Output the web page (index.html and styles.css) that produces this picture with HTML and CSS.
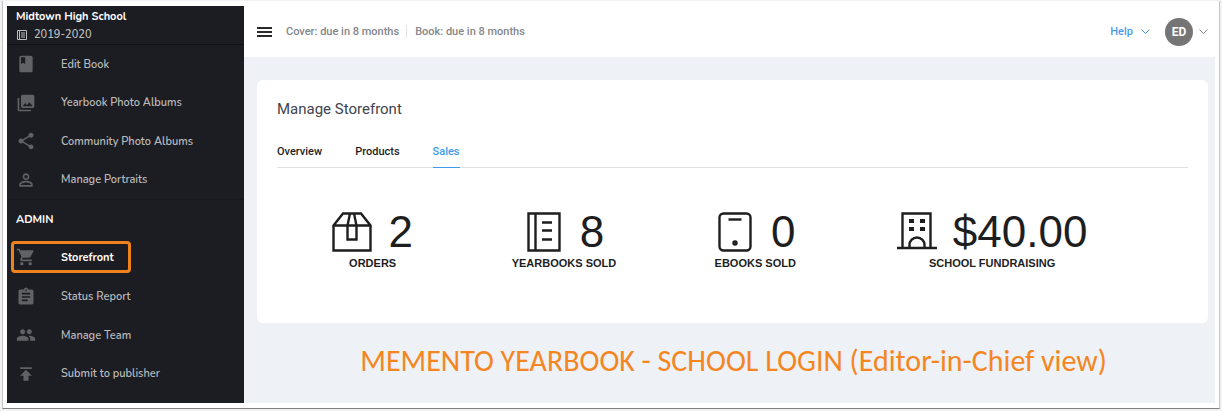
FILE: index.html
```html
<!DOCTYPE html>
<html lang="en">
<head>
    <meta charset="UTF-8">
    <meta name="viewport" content="width=device-width, initial-scale=1.0">
    <title>Manage Storefront</title>
    <link rel="stylesheet" href="styles.css">
</head>
<body>
    <div class="frame">
        <!-- Sidebar -->
        <aside class="sidebar">
            <div class="school">
                <div class="school-name">Midtown High School</div>
                <div class="school-year">
                    <svg width="12" height="12" viewBox="0 0 12 12" fill="none" stroke="currentColor"><path d="M1.5 1.5h9v9h-9zM3.5 1.5v9M5 4h4M5 6h4M5 8h4"/></svg>
                    2019-2020
                </div>
            </div>
            <nav>
                <ul class="menu">
                    <li><a href="#">
                        <svg viewBox="0 0 24 24"><path d="M18 2H6c-1.100 0-2 .9-2 2v16c0 1.100.9 2 2 2h12c1.100 0 2-.9 2-2V4c0-1.100-.9-2-2-2zM6 4h5v8l-2.500-1.500L6 12V4z"/></svg>
                        Edit Book</a></li>
                    <li><a href="#">
                        <svg viewBox="0 0 24 24"><path d="M22 16V4c0-1.100-.9-2-2-2H8c-1.100 0-2 .9-2 2v12c0 1.100.9 2 2 2h12c1.100 0 2-.9 2-2zm-11-4l2.030 2.710L16 11l4 5H8l3-4zM2 6v14c0 1.100.9 2 2 2h14v-2H4V6H2z"/></svg>
                        Yearbook Photo Albums</a></li>
                    <li><a href="#">
                        <svg viewBox="0 0 24 24"><path d="M18 16.080c-.76 0-1.440.3-1.960.77L8.910 12.700c.05-.23.09-.46.09-.7s-.04-.47-.09-.7l7.050-4.110c.54.5 1.250.81 2.040.81 1.660 0 3-1.340 3-3s-1.340-3-3-3-3 1.340-3 3c0 .24.04.47.09.7L8.040 9.810C7.500 9.310 6.790 9 6 9c-1.660 0-3 1.340-3 3s1.340 3 3 3c.79 0 1.500-.31 2.040-.81l7.120 4.160c-.05.21-.08.43-.08.65 0 1.610 1.310 2.920 2.920 2.920s2.920-1.310 2.920-2.920-1.310-2.920-2.920-2.920z"/></svg>
                        Community Photo Albums</a></li>
                    <li><a href="#">
                        <svg viewBox="0 0 24 24"><path d="M12 5.900a2.100 2.100 0 1 1 0 4.200 2.100 2.100 0 0 1 0-4.200m0 9c2.970 0 6.100 1.460 6.100 2.100v1.100H5.900V17c0-.64 3.130-2.100 6.100-2.100M12 4C9.790 4 8 5.790 8 8s1.790 4 4 4 4-1.790 4-4-1.790-4-4-4zm0 9c-2.670 0-8 1.340-8 4v3h16v-3c0-2.660-5.330-4-8-4z"/></svg>
                        Manage Portraits</a></li>
                </ul>
                <h2 class="menu-title">ADMIN</h2>
                <ul class="menu">
                    <li><a href="#" class="active">
                        <svg viewBox="0 0 24 24"><path d="M7 18c-1.100 0-1.990.9-1.990 2S5.900 22 7 22s2-.9 2-2-.9-2-2-2zM1 2v2h2l3.600 7.590-1.350 2.450c-.16.28-.25.61-.25.96 0 1.100.9 2 2 2h12v-2H7.420c-.14 0-.25-.11-.25-.25l.03-.12.9-1.630h7.450c.75 0 1.410-.41 1.750-1.030l3.580-6.490A1 1 0 0 0 20 4H5.210l-.94-2H1zm16 16c-1.100 0-1.990.9-1.990 2s.89 2 1.990 2 2-.9 2-2-.9-2-2-2z"/></svg>
                        Storefront</a></li>
                    <li><a href="#">
                        <svg viewBox="0 0 24 24"><path d="M19 3h-4.180C14.400 1.840 13.300 1 12 1s-2.400.84-2.820 2H5c-1.100 0-2 .9-2 2v14c0 1.100.9 2 2 2h14c1.100 0 2-.9 2-2V5c0-1.100-.9-2-2-2zm-7 0c.55 0 1 .45 1 1s-.45 1-1 1-1-.45-1-1 .45-1 1-1zm2 14H7v-2h7v2zm3-4H7v-2h10v2zm0-4H7V7h10v2z"/></svg>
                        Status Report</a></li>
                    <li><a href="#">
                        <svg viewBox="0 0 24 24"><path d="M16 11c1.660 0 2.990-1.340 2.990-3S17.660 5 16 5s-3 1.340-3 3 1.340 3 3 3zm-8 0c1.660 0 2.990-1.340 2.990-3S9.660 5 8 5 5 6.340 5 8s1.340 3 3 3zm0 2c-2.330 0-7 1.170-7 3.500V19h14v-2.500c0-2.330-4.670-3.500-7-3.500zm8 0c-.29 0-.62.02-.97.05 1.160.84 1.970 1.970 1.970 3.450V19h6v-2.500c0-2.330-4.670-3.500-7-3.500z"/></svg>
                        Manage Team</a></li>
                    <li><a href="#">
                        <svg viewBox="0 0 24 24"><path d="M5 4v2h14V4H5zm0 10h4v6h6v-6h4l-7-7-7 7z"/></svg>
                        Submit to publisher</a></li>
                </ul>
            </nav>
        </aside>

        <main class="main">
            <!-- Top bar -->
            <header class="topbar">
                <button type="button" class="burger" aria-label="Toggle menu">
                    <svg width="15" height="10" viewBox="0 0 15 10" fill="currentColor"><path d="M0 0h15v2H0zM0 4h15v2H0zM0 8h15v2H0z"/></svg>
                </button>
                <span class="due">Cover: due in 8 months</span>
                <span class="due">Book: due in 8 months</span>
                <a href="#" class="help">Help
                    <svg width="9" height="6" viewBox="0 0 9 6" fill="none" stroke="currentColor"><path d="M.5 .5l4 4 4-4"/></svg>
                </a>
                <button type="button" class="account" aria-label="Account">
                    <span class="avatar">ED</span>
                    <svg width="9" height="6" viewBox="0 0 9 6" fill="none" stroke="currentColor"><path d="M.5 .5l4 4 4-4"/></svg>
                </button>
            </header>

            <!-- Storefront card -->
            <section class="card">
                <h1>Manage Storefront</h1>
                <div class="tabs">
                    <a href="#">Overview</a>
                    <a href="#">Products</a>
                    <a href="#" class="selected">Sales</a>
                </div>
                <div class="stats">
                    <div class="stat">
                        <div class="figure">
                            <svg width="40" height="40" viewBox="0 0 40 40" stroke-width="2.4"><path d="M1.500 13.500L11 1.500h18l9.500 12v25h-37zM1.500 13.500h37M18 1.500l-2.500 12V27.500h9V13.500l-2.500-12"/></svg>
                            2
                        </div>
                        <div class="label">ORDERS</div>
                    </div>
                    <div class="stat">
                        <div class="figure">
                            <svg width="40" height="40" viewBox="-2 0 40 40" stroke-width="2.4"><path d="M2.500 1.500h31v37h-31zM9.500 1.500v37M16 10.500h10M16 18.500h10M16 27.500h10"/></svg>
                            8
                        </div>
                        <div class="label">YEARBOOKS SOLD</div>
                    </div>
                    <div class="stat">
                        <div class="figure">
                            <svg width="40" height="40" viewBox="-2 0 40 40" stroke-width="2.4"><rect x="2.500" y="1.500" width="31" height="37" rx="4"/><path d="M11.500 7.500h13"/><circle cx="18" cy="31" r="1.500"/></svg>
                            0
                        </div>
                        <div class="label">EBOOKS SOLD</div>
                    </div>
                    <div class="stat">
                        <div class="figure">
                            <svg width="40" height="40" viewBox="0 0 40 40" stroke-width="2.4"><path d="M5.500 36V1.500h28V36M0 36h40M12.500 36v-3a7.500 7.500 0 0 1 15 0v3"/><path class="solid" d="M12 7h5v4h-5zM23 7h5v4h-5zM12 15h5v4h-5zM23 15h5v4h-5z"/></svg>
                            $40.00
                        </div>
                        <div class="label">SCHOOL FUNDRAISING</div>
                    </div>
                </div>
            </section>

            <p class="caption">MEMENTO YEARBOOK - SCHOOL LOGIN (Editor-in-Chief view)</p>
        </main>
    </div>
</body>
</html>
```
FILE: styles.css
```css
* {
    box-sizing: border-box;
}

body {
    margin: 0;
    padding: 1px 2px 2px;
    min-height: 100vh;
    display: flex;
    background: #f2f2f2;
    font-family: Roboto, sans-serif;
    font-size: 11px;
    font-weight: 500;
    color: #1e1e1e;
}

a {
    color: inherit;
    text-decoration: none;
}

button {
    padding: 0;
    border: 0;
    background: none;
    font: inherit;
    color: inherit;
    cursor: pointer;
}

.frame {
    flex: 1;
    display: flex;
    padding: 5px 4px;
    background: white;
    border: solid #c4c4c4;
    border-width: 0 1px 1px;
    border-bottom-color: #808080;
}

/* Sidebar */
.sidebar {
    width: 237px;
    flex-shrink: 0;
    background: #1c1d22;
    color: #b9babc;
    font-family: Nunito, Lato, sans-serif;
    font-weight: 600;
}

.school {
    height: 39px;
    padding: 2px 9px 0;
    border-bottom: 1px solid #111216;
    line-height: 18px;
}

.school-name {
    color: white;
    font-weight: bold;
}

.school-year {
    display: flex;
    align-items: center;
    gap: 6px;
}

.menu {
    list-style: none;
    margin: 0;
    padding: 0;
    display: grid;
    grid-auto-rows: 1fr;
    height: 154px;
}

.menu a {
    height: 100%;
    display: flex;
    align-items: center;
    gap: 25px;
    padding-left: 9px;
}

.menu svg {
    width: 20px;
    height: 20px;
    fill: #616266;
}

.menu-title {
    margin: 0;
    padding: 1px 9px 0;
    border-top: 1px solid #17181c;
    color: white;
    font-size: 11px;
    line-height: 38px;
}

.menu .active {
    height: 32px;
    width: 120px;
    margin: 2px 0 4px 4px;
    padding-left: 2px;
    border: 3px solid #f0821e;
    border-radius: 4px;
    color: white;
    font-weight: bold;
}

/* Main area */
.main {
    flex: 1;
    background: #eef1f5;
}

.topbar {
    height: 51px;
    padding: 0 7px 0 13px;
    display: flex;
    align-items: center;
    background: white;
    color: #85878a;
}

.burger {
    display: flex;
    margin-right: 14px;
    color: #2a2a2a;
}

.due + .due {
    margin-left: 7px;
    padding-left: 8px;
    border-left: 1px solid #e2e4e6;
}

.help {
    display: flex;
    align-items: center;
    gap: 8px;
    margin-left: auto;
    margin-right: 15px;
    color: #4a9ceb;
}

.account {
    display: flex;
    align-items: center;
    gap: 6px;
}

.avatar {
    width: 28px;
    border-radius: 50%;
    background: #757575;
    color: white;
    font-size: 12px;
    font-weight: bold;
    line-height: 28px;
}

/* Card */
.card {
    margin: 23px 7px 0 13px;
    padding: 19px 20px 53px;
    background: white;
    border-radius: 6px;
}

h1 {
    margin: 0 0 25px;
    font-size: 15px;
    font-weight: normal;
    line-height: 20px;
    color: #40444c;
}

.tabs {
    display: flex;
    gap: 33px;
    border-bottom: 1px solid #dfe1e4;
    line-height: 16px;
}

.tabs a {
    padding-bottom: 7px;
    margin-bottom: -1px;
    border-bottom: 1px solid transparent;
}

.tabs .selected {
    color: #3d9bee;
    border-color: #3d9bee;
}

.stats {
    display: grid;
    grid-template-columns: 21% 21% 21% 31%;
    margin-top: 43px;
    font-family: "Liberation Sans", Arial, sans-serif;
    text-align: center;
}

.figure {
    display: flex;
    justify-content: center;
    align-items: center;
    gap: 16px;
    height: 42px;
    font-size: 44px;
    font-weight: normal;
}

.figure svg {
    fill: none;
    stroke: #1e1e1e;
}

.figure .solid {
    fill: #1e1e1e;
    stroke: none;
}

.label {
    margin-top: 3px;
    font-size: 11px;
    font-weight: bold;
    line-height: 14px;
}

.caption {
    margin: 20px 0 0;
    padding-left: 8px;
    color: #f5861f;
    font-family: Carlito, Lato, sans-serif;
    font-size: 30px;
    font-weight: normal;
    line-height: 36px;
    text-align: center;
}
```
